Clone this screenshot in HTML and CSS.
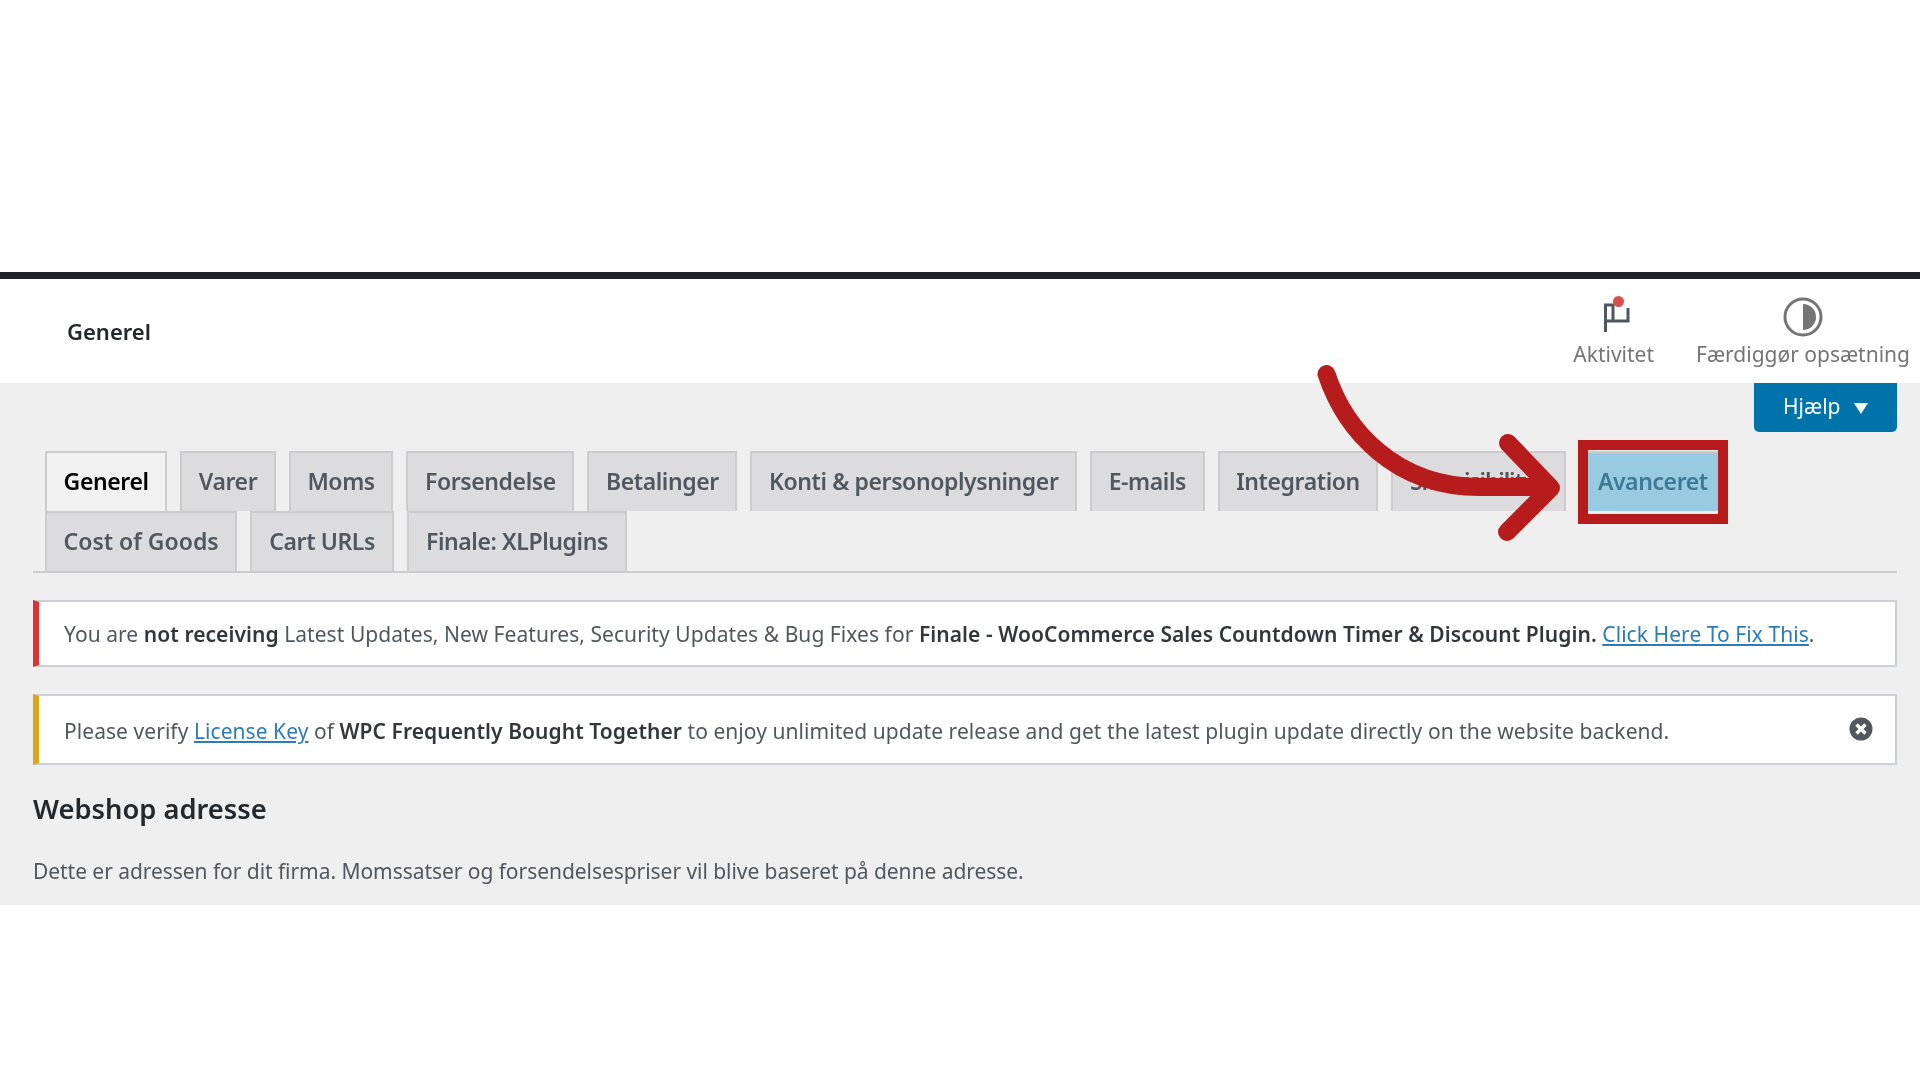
FILE: index.html
```html
<!DOCTYPE html>
<html>
<head>
<meta charset="utf-8">
<title>Generel</title>
<link rel="stylesheet" href="styles.css">
</head>
<body>
	<div class="top_space"></div>
	<section class="header">
		<h1 class="header_title">Generel</h1>
		<div class="header_tools">
			<a class="tool tool_activity" href="#">
				<svg class="tool_icon" width="40" height="46" viewBox="0 0 40 46">
					<path d="M11.5 38V11H19V27M11.5 27H34V14" fill="none" stroke="#50575e" stroke-width="3"/>
					<circle cx="24.5" cy="7.5" r="5.5" fill="#d94f4f"/>
				</svg>
				<span>Aktivitet</span>
			</a>
			<a class="tool tool_setup" href="#">
				<svg class="tool_icon" width="40" height="46" viewBox="0 0 40 46">
					<circle cx="20" cy="23" r="18" fill="none" stroke="#757575" stroke-width="3"/>
					<path d="M20 10a13 13 0 0 1 0 26z" fill="#757575"/>
				</svg>
				<span>Færdiggør opsætning</span>
			</a>
		</div>
	</section>
	<section class="main">
		<div class="help_row">
			<a class="help_btn" href="#">Hjælp <i class="help_arrow"></i></a>
		</div>
		<nav class="tabs">
			<div class="tab_row">
				<a class="tab tab_on" href="#">Generel</a>
				<a class="tab" href="#">Varer</a>
				<a class="tab" href="#">Moms</a>
				<a class="tab" href="#">Forsendelse</a>
				<a class="tab" href="#">Betalinger</a>
				<a class="tab" href="#">Konti &amp; personoplysninger</a>
				<a class="tab" href="#">E-mails</a>
				<a class="tab" href="#">Integration</a>
				<a class="tab tab_site" href="#">Site visibility</a>
				<a class="tab tab_hl" href="#">Avanceret</a>
			</div>
			<div class="tab_row">
				<a class="tab tab_cost" href="#">Cost of Goods</a>
				<a class="tab tab_low" href="#">Cart URLs</a>
				<a class="tab tab_low" href="#">Finale: XLPlugins</a>
			</div>
		</nav>
		<div class="notice notice_red">
			<p>You are <b>not receiving</b> Latest Updates, New Features, Security Updates &amp; Bug Fixes for <b>Finale - WooCommerce Sales Countdown Timer &amp; Discount Plugin.</b> <a href="#">Click Here To Fix This</a>.</p>
		</div>
		<div class="notice notice_yellow">
			<p>Please verify <a href="#">License Key</a> of <b>WPC Frequently Bought Together</b> to enjoy unlimited update release and get the latest plugin update directly on the website backend.</p>
			<svg class="notice_close" width="24" height="24" viewBox="0 0 24 24">
				<circle cx="12" cy="12" r="11.5" fill="#50575e"/>
				<path d="M7.5 7.5l9 9M16.5 7.5l-9 9" stroke="#fff" stroke-width="3.4"/>
			</svg>
		</div>
		<h2 class="section_title">Webshop adresse</h2>
		<p class="section_text">Dette er adressen for dit firma. Momssatser og forsendelsespriser vil blive baseret på denne adresse.</p>
	</section>

	<!-- red marks laid over the screenshot -->
	<div class="mark_box"></div>
	<svg class="mark_arrow" width="1920" height="1080" viewBox="0 0 1920 1080">
		<path d="M1326.5 374C1345 430 1395 487 1480 487H1548M1508 443L1551 488L1507 532" fill="none" stroke="#b71c1c" stroke-width="18" stroke-linecap="round" stroke-linejoin="round"/>
	</svg>
</body>
</html>
```

FILE: styles.css
```css
*{ box-sizing: border-box;}
body{ margin: 0; background: #fff; color: #3c434a; font-family: "Noto Sans", "Open Sans", sans-serif; font-size: 21px; height: 1080px; overflow: hidden; position: relative;}
a{ color: inherit; text-decoration: none;}
p{ margin: 0;}

.top_space{ height: 272px;}

.header{ height: 111px; border-top: 7px solid #1d2327; display: flex; justify-content: space-between; padding: 0 10px 0 67px; filter: blur(.5px);}
.header_title{ margin: 0; padding-top: 35px; font-size: 22px; font-weight: 600; line-height: 34px; color: #23282d;}
.header_tools{ display: flex; gap: 42px;}
.tool{ display: flex; flex-direction: column; align-items: center; color: #757575; font-size: 21px; line-height: 28px; padding-top: 15px;}
.tool_icon{ display: block;}

.main{ height: 522px; background: #efefef; padding: 0 23px 0 33px; filter: blur(.5px);}
.help_row{ display: flex; justify-content: flex-end; height: 68px;}
.help_btn{ width: 143px; height: 49px; background: #0073aa; color: #fff; border-radius: 0 0 5px 5px; font-size: 21px; line-height: 47px; text-align: center;}
.help_arrow{ display: inline-block; width: 0; height: 0; margin-left: 8px; border: 7.5px solid transparent; border-top: 11px solid #fff; border-bottom: 0;}

.tabs{ border-bottom: 2px solid #ccc; padding-left: 12px;}
.tab_row{ display: flex; gap: 13px;}
.tab{ height: 60px; padding: 0 16.6px; background: #dcdcde; border: 2px solid #ccc; border-bottom: 0; color: #50575e; font-size: 23px; font-weight: 600; line-height: 56px; white-space: nowrap; letter-spacing: -0.4px;}
.tab_on{ background: #f1f1f1; color: #000;}
.tab_site{ letter-spacing: -1.1px; padding-right: 30px;}
.tab_cost{ letter-spacing: 0;}
.tab_low{ padding: 0 17px;}
.tab_hl{ background: #98cbe1; color: #3f7894;}

.notice{ display: flex; justify-content: space-between; align-items: center; background: #fff; border: 2px solid #ccd0d4; border-left-width: 6px; padding: 1px 22px 0 25px; letter-spacing: .06px; color: #50575e;}
.notice a{ color: #2b7cb8; text-decoration: underline;}
.notice b{ font-weight: 600; color: #32373c;}
.notice_red{ height: 67px; margin-top: 27px; border-left-color: #dc3232;}
.notice_yellow{ height: 71px; margin-top: 27px; padding-top: 3px; border-left-color: #dba617;}
.notice_close{ display: block; margin-top: -5px;}

.section_title{ margin: 25px 0 0; font-size: 27.3px; font-weight: 600; line-height: 38px; color: #23282d;}
.section_text{ margin-top: 29px; line-height: 28px; letter-spacing: -.05px; color: #50575e;}

.mark_box{ position: absolute; left: 1578px; top: 440px; width: 150px; height: 84px; border: 10px solid #b71c1c;}
.mark_arrow{ position: absolute; left: 0; top: 0;}
```
